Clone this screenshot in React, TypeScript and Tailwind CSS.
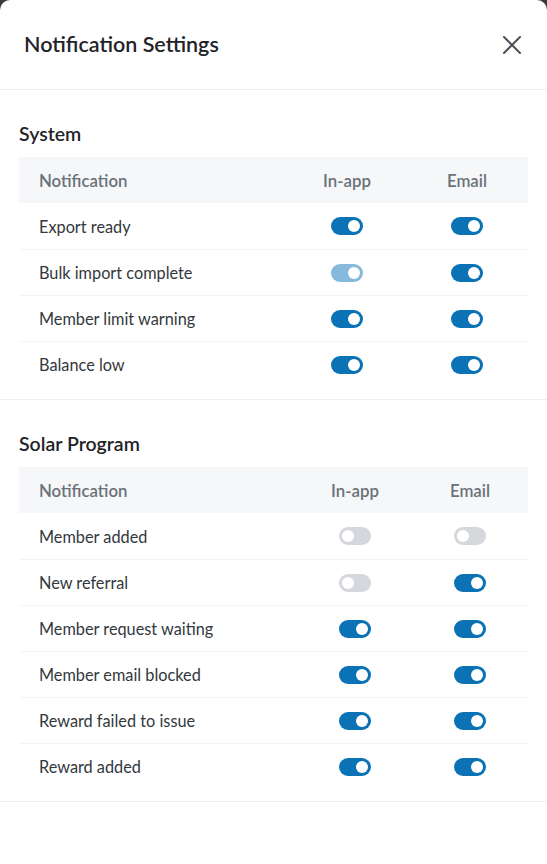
import { X } from 'lucide-react';

type Row = { label: string; inApp: 'on' | 'off' | 'faded'; email: 'on' | 'off' | 'faded' };

interface Section {
  title: string;
  cols: string;
  rows: Row[];
}

const sections: Section[] = [
  {
    title: 'System',
    cols: 'grid-cols-[269px_118px_122px]',
    rows: [
      { label: 'Export ready', inApp: 'on', email: 'on' },
      { label: 'Bulk import complete', inApp: 'faded', email: 'on' },
      { label: 'Member limit warning', inApp: 'on', email: 'on' },
      { label: 'Balance low', inApp: 'on', email: 'on' },
    ],
  },
  {
    title: 'Solar Program',
    cols: 'grid-cols-[279px_114px_116px]',
    rows: [
      { label: 'Member added', inApp: 'off', email: 'off' },
      { label: 'New referral', inApp: 'off', email: 'on' },
      { label: 'Member request waiting', inApp: 'on', email: 'on' },
      { label: 'Member email blocked', inApp: 'on', email: 'on' },
      { label: 'Reward failed to issue', inApp: 'on', email: 'on' },
      { label: 'Reward added', inApp: 'on', email: 'on' },
    ],
  },
];

const Toggle = ({ state }: { state: Row['inApp'] }) => {
  const track =
    state === 'on' ? 'bg-[#0b72b5] justify-end' : state === 'faded' ? 'bg-[#86b9dc] justify-end' : 'bg-[#d4d7db] justify-start';
  return (
    <span className={`flex items-center w-8 h-[18px] rounded-full px-[3px] ${track}`}>
      <span className="block w-3 h-3 rounded-full bg-white" />
    </span>
  );
};

const App = () => {
  return (
    <div className="bg-[#3a3a3a] min-h-[864px]" style={{ fontFamily: 'Lato, "Noto Sans", sans-serif' }}>
      <div className="bg-white rounded-t-[10px] h-[864px]">
        <div className="flex items-center justify-between h-[90px] pl-6 pr-[19px] border-b border-[#eceef0]">
          <h2 className="text-[21.5px] font-semibold text-[#1f2429]">Notification Settings</h2>
          <X size={32} strokeWidth={1.5} className="text-[#4b5158]" />
        </div>

        {sections.map((section) => (
          <div key={section.title} className="px-[19px] pt-[32px] pb-3 border-b border-[#eceef0]">
            <h3 className="text-[19.5px] leading-6 font-semibold text-[#1f2429]">{section.title}</h3>
            <div className="mt-[11px]">
              <div className={`grid ${section.cols} h-[46px] items-center bg-[#f5f7f9] text-[16.8px] font-semibold text-[#6b7178]`}>
                <span className="pl-5 pt-0.5">Notification</span>
                <span className="text-center pt-0.5">In-app</span>
                <span className="text-center pt-0.5">Email</span>
              </div>
              {section.rows.map((row, index) => (
                <div
                  key={row.label}
                  className={`grid ${section.cols} h-[46px] items-center text-[16.3px] text-[#33383d] ${index > 0 ? 'border-t border-[#f3f4f6]' : ''}`}
                >
                  <span className="pl-5 pt-0.5">{row.label}</span>
                  <span className="flex justify-center">
                    <Toggle state={row.inApp} />
                  </span>
                  <span className="flex justify-center">
                    <Toggle state={row.email} />
                  </span>
                </div>
              ))}
            </div>
          </div>
        ))}
      </div>
    </div>
  );
};

export default App;
